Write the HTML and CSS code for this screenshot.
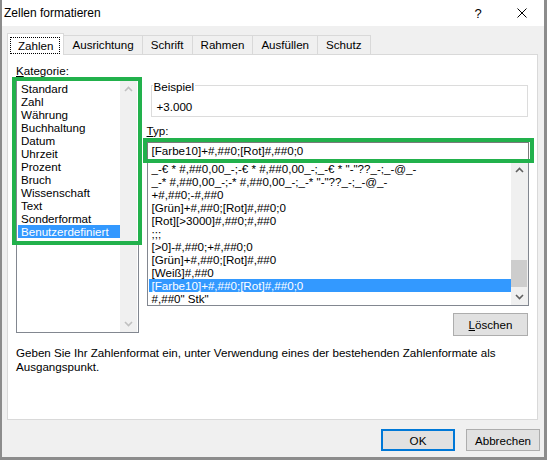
FILE: index.html
```html
<!DOCTYPE html>
<html lang="de">
<head>
  <meta charset="UTF-8">
  <title>Zellen formatieren</title>
  <link rel="stylesheet" href="styles.css">
</head>
<body>
  <div class="dialog">
    <div class="titlebar">
      <span class="title">Zellen formatieren</span>
      <span class="caption-btn">?</span>
      <span class="caption-btn">
        <svg width="10" height="10" viewBox="0 0 10 10"><path d="M0.5 0.5 L9.5 9.5 M9.5 0.5 L0.5 9.5" stroke="#000" stroke-width="1" fill="none"/></svg>
      </span>
    </div>

    <div class="tabs">
      <div class="tab active"><span class="focus">Zahlen</span></div>
      <div class="tab">Ausrichtung</div>
      <div class="tab">Schrift</div>
      <div class="tab">Rahmen</div>
      <div class="tab">Ausfüllen</div>
      <div class="tab">Schutz</div>
    </div>

    <div class="panel">
      <div class="columns">
        <div class="left">
          <div class="label"><u>K</u>ategorie:</div>
          <div class="listbox cat">
            <ul class="items">
              <li>Standard</li>
              <li>Zahl</li>
              <li>Währung</li>
              <li>Buchhaltung</li>
              <li>Datum</li>
              <li>Uhrzeit</li>
              <li>Prozent</li>
              <li>Bruch</li>
              <li>Wissenschaft</li>
              <li>Text</li>
              <li>Sonderformat</li>
              <li class="selected">Benutzerdefiniert</li>
            </ul>
            <div class="scrollbar disabled">
              <div class="arrow"><svg width="9" height="6" viewBox="0 0 9 6"><path d="M1 5 L4.5 1.5 L8 5" fill="none" stroke-width="1.6"/></svg></div>
              <div class="track"></div>
              <div class="arrow"><svg width="9" height="6" viewBox="0 0 9 6"><path d="M1 1 L4.5 4.5 L8 1" fill="none" stroke-width="1.6"/></svg></div>
            </div>
          </div>
        </div>

        <div class="right">
          <div class="sample">
            <span class="legend">Beispiel</span>
            <span class="value">+3.000</span>
          </div>
          <div class="label typ"><u>T</u>yp:</div>
          <div class="input">[Farbe10]+#,##0;[Rot]#,##0;0</div>
          <div class="listbox types">
            <ul class="items">
              <li>_-€ * #,##0,00_-;-€ * #,##0,00_-;_-€ * "-"??_-;_-@_-</li>
              <li>_-* #,##0,00_-;-* #,##0,00_-;_-* "-"??_-;_-@_-</li>
              <li>+#,##0;-#,##0</li>
              <li>[Grün]+#,##0;[Rot]#,##0;0</li>
              <li>[Rot][&gt;3000]#,##0;#,##0</li>
              <li>;;;</li>
              <li>[&gt;0]-#,##0;+#,##0;0</li>
              <li>[Grün]+#,##0;[Rot]#,##0</li>
              <li>[Weiß]#,##0</li>
              <li class="selected">[Farbe10]+#,##0;[Rot]#,##0;0</li>
              <li>#,##0" Stk"</li>
            </ul>
            <div class="scrollbar">
              <div class="arrow"><svg width="9" height="6" viewBox="0 0 9 6"><path d="M1 5 L4.5 1.5 L8 5" fill="none" stroke-width="1.6"/></svg></div>
              <div class="track"><div class="thumb"></div></div>
              <div class="arrow"><svg width="9" height="6" viewBox="0 0 9 6"><path d="M1 1 L4.5 4.5 L8 1" fill="none" stroke-width="1.6"/></svg></div>
            </div>
          </div>
          <div class="actions">
            <button class="btn delete"><u>L</u>öschen</button>
          </div>
        </div>
      </div>

      <p class="hint">Geben Sie Ihr Zahlenformat ein, unter Verwendung eines der bestehenden Zahlenformate als Ausgangspunkt.</p>

      <div class="mark mark-cat"></div>
      <div class="mark mark-type"></div>
    </div>

    <div class="footer">
      <button class="btn ok">OK</button>
      <button class="btn">Abbrechen</button>
    </div>
  </div>
</body>
</html>
```

FILE: styles.css
```css
* {
  box-sizing: border-box;
}
body {
  margin: 0;
  font-family: "Liberation Sans", Arial, sans-serif;
  font-size: 11.6px;
  color: #000;
  background: #fff;
}
.dialog {
  width: 547px;
  height: 460px;
  background: #f0f0f0;
  border-left: 2px solid #8c8c8c;
  border-right: 3px solid #8c8c8c;
  border-bottom: 3px solid #8c8c8c;
}

/* title bar */
.titlebar {
  height: 26px;
  background: #fff;
  display: flex;
  align-items: center;
  padding-left: 2px;
  font-size: 12px;
}
.title {
  flex: 1;
}
.caption-btn {
  width: 44px;
  height: 26px;
  display: flex;
  align-items: center;
  justify-content: center;
  font-size: 13px;
}

/* tabs */
.tabs {
  display: flex;
  align-items: flex-end;
  height: 21px;
  margin: 7px 0 0 5px;
  position: relative;
  z-index: 1;
}
.tab {
  height: 19px;
  line-height: 18px;
  padding: 0 8px;
  margin-left: -1px;
  border: 1px solid #d9d9d9;
  border-bottom: none;
  background: #f0f0f0;
}
.tab.active {
  height: 22px;
  margin: 0 0 -1px 0;
  padding: 3px 4px 0 3px;
  background: #fff;
}
.focus {
  display: inline-block;
  line-height: 15px;
  padding: 0 6px 0 7px;
  outline: 1px dotted #000;
}

/* panel */
.panel {
  position: relative;
  height: 366px;
  margin: 0 6px 0 5px;
  padding: 9px 8px 0 8px;
  background: #fff;
  border: 1px solid #d9d9d9;
}
.columns {
  display: flex;
  gap: 8px;
}
.left {
  width: 123px;
}
.right {
  width: 384px;
}
.label {
  line-height: 14px;
  height: 15px;
}
.label.typ {
  margin-top: 7px;
  height: 18px;
}

.listbox {
  display: flex;
  border: 1px solid #828790;
  background: #fff;
}
.listbox.cat {
  height: 254px;
}
.listbox.types {
  height: 146px;
}
.items {
  flex: 1;
  list-style: none;
  margin: 0;
  padding: 1px 0 0 1px;
}
.cat .items {
  padding-top: 2px;
}
.items li {
  height: 13px;
  line-height: 13px;
  padding-left: 3px;
  white-space: nowrap;
}
.items li.selected {
  background: #3399ff;
  color: #fff;
}

.scrollbar {
  width: 17px;
  display: flex;
  flex-direction: column;
  background: #f0f0f0;
}
.cat .scrollbar {
  margin: 0 1px 0 0;
}
.scrollbar .arrow {
  height: 17px;
  display: flex;
  align-items: center;
  justify-content: center;
}
.scrollbar svg path {
  stroke: #606060;
}
.scrollbar.disabled svg path {
  stroke: #c0c0c0;
}
.track {
  flex: 1;
}
.thumb {
  height: 27px;
  margin: 82px 1px 0 0;
  background: #cdcdcd;
}

.sample {
  display: flex;
  flex-direction: column;
  height: 32px;
  margin: 21px 1px 0 4px;
  border: 1px solid #dcdcdc;
}
.legend {
  align-self: flex-start;
  line-height: 14px;
  margin: -6px 0 0 1px;
  padding: 0 1px;
  background: #fff;
}
.value {
  line-height: 14px;
  margin-top: 6px;
  padding-left: 5px;
}

.input {
  height: 18px;
  line-height: 15px;
  padding-left: 4px;
  border: 1px solid #7a7a7a;
}

.actions {
  display: flex;
  justify-content: flex-end;
  margin: 7px 1px 0 0;
}
.btn {
  font-family: inherit;
  font-size: 11.6px;
  color: #000;
  background: #e1e1e1;
  border: 1px solid #adadad;
  padding: 0;
}
.btn.delete {
  width: 75px;
  height: 23px;
}

.hint {
  margin: 10px 0 0 0;
  line-height: 14px;
}

/* annotation frames */
.mark {
  position: absolute;
  border: 4px solid #22b14c;
}
.mark-cat {
  left: 4px;
  top: 22px;
  width: 130px;
  height: 168px;
}
.mark-type {
  left: 135px;
  top: 83px;
  width: 391px;
  height: 25px;
}

/* footer */
.footer {
  display: flex;
  justify-content: flex-end;
  gap: 11px;
  padding: 9px 4px 0 0;
}
.footer .btn {
  width: 74px;
  height: 22px;
}
.btn.ok {
  border: 2px solid #0078d7;
}
```
